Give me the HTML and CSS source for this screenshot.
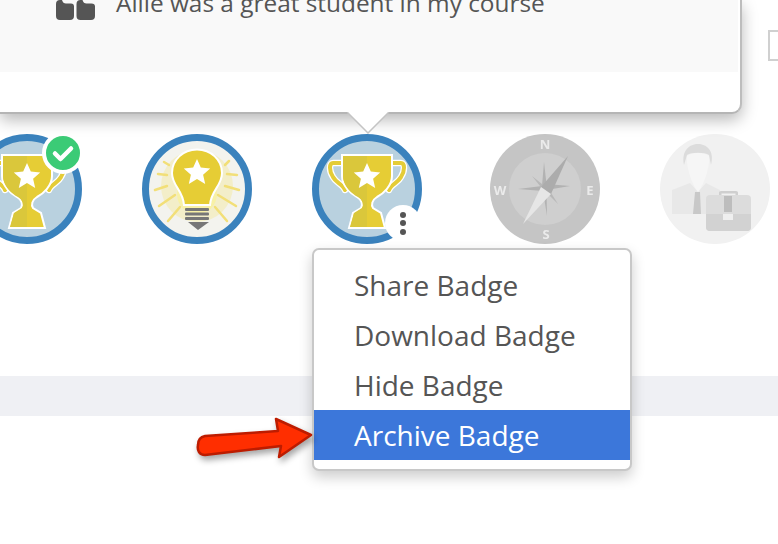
FILE: index.html
```html
<!DOCTYPE html>
<html lang="en">
<head>
<meta charset="utf-8">
<title>Badges</title>
<link rel="stylesheet" href="styles.css">
</head>
<body>
<svg class="defs" width="0" height="0" aria-hidden="true">
  <defs>
    <g id="trophy">
      <g fill="none" stroke-linecap="round" stroke-linejoin="round">
        <path d="M32 29H21C17 29 17 37 21 43C24 49 31 50 33 56" stroke="#fff" stroke-width="6.500"/>
        <path d="M78 29H89C93 29 93 37 89 43C86 49 79 50 77 56" stroke="#fff" stroke-width="6.500"/>
        <path d="M32 29H21C17 29 17 37 21 43C24 49 31 50 33 56" stroke="#e4cc37" stroke-width="4"/>
        <path d="M78 29H89C93 29 93 37 89 43C86 49 79 50 77 56" stroke="#e4cc37" stroke-width="4"/>
      </g>
      <path d="M30 21H80V42C80 52 71 60 65 63C60 66 59 71 61 74L69 79L73 94H37L41 79L49 74C51 71 50 66 45 63C39 60 30 52 30 42Z" fill="#e6cd35" stroke="#fff" stroke-width="2"/>
      <path d="M31 22H55V93H38L42 79L50 74C52 71 51 66 46 63C40 60 31 52 31 42Z" fill="#dac73b"/>
      <path d="M55 29l3.800 8.600 9.400.9-7.100 6.200 2.100 9.200-8.200-4.800-8.200 4.800 2.100-9.200-7.100-6.200 9.400-.9Z" fill="#fff"/>
    </g>
  </defs>
</svg>

<div class="top">
  <section class="card">
    <div class="quote">
      <svg class="quote-icon" viewBox="0 0 39 20" width="39" height="20" aria-hidden="true">
        <path d="M0 16V4Q0 0 4 0H6Q7 3.500 10 3.500H15Q18 3.500 18 6.500V16Q18 20 14 20H4Q0 20 0 16ZM20.500 16V4Q20.500 0 24.500 0H26.500Q27.500 3.500 30.500 3.500H35.500Q39 3.500 39 6.500V16Q39 20 35 20H24.500Q20.500 20 20.500 16Z" fill="#555"/>
      </svg>
      <p class="quote-text">Allie was a great student in my course</p>
    </div>
  </section>
  <div class="sliver"></div>
</div>

<div class="badges">
  <div class="badge">
    <svg viewBox="0 0 110 110" width="110" height="110" aria-hidden="true">
      <circle cx="55" cy="55" r="51.500" fill="#b9d1df" stroke="#3a82bd" stroke-width="7"/>
      <use href="#trophy"/>
    </svg>
    <span class="check">
      <svg viewBox="0 0 34 34" width="34" height="34" aria-hidden="true">
        <path d="M9 17.500L14.500 23L25 12.500" fill="none" stroke="#fff" stroke-width="4.500" stroke-linecap="round" stroke-linejoin="round"/>
      </svg>
    </span>
  </div>

  <div class="badge">
    <svg viewBox="0 0 110 110" width="110" height="110" aria-hidden="true">
      <circle cx="55" cy="55" r="51.500" fill="#f3f3ee" stroke="#3a82bd" stroke-width="7"/>
      <circle cx="55" cy="52" r="36" fill="#f3eec9"/>
      <circle cx="55" cy="60" r="20" fill="#f8f1a6"/>
      <g stroke="#f2df78" stroke-width="2.500" stroke-linecap="round">
        <path d="M22 28L27 31M16 40L25 41M13 56L25 52M17 72L33 61M26 87L38 73"/>
        <path d="M83 31L87 27M85 40L95 41M83 52L97 56M76 61L94 72M73 73L85 87"/>
      </g>
      <path d="M55 15.500C69 15.500 80 26 80 39C80 52 69 56 68 71H42C41 56 30 52 30 39C30 26 41 15.500 55 15.500Z" fill="#e6cd35" stroke="#fff" stroke-width="2"/>
      <path d="M55 25l3.800 8.600 9.400.9-7.100 6.200 2.100 9.200-8.200-4.800-8.200 4.800 2.100-9.200-7.100-6.200 9.400-.9Z" fill="#fff"/>
      <g fill="#777">
        <rect x="43" y="74" width="24" height="3" rx="1"/>
        <rect x="43" y="78.500" width="24" height="3" rx="1"/>
        <rect x="43" y="83" width="24" height="3" rx="1"/>
        <path d="M46 88H67L56 96Z"/>
      </g>
    </svg>
  </div>

  <div class="badge">
    <svg viewBox="0 0 110 110" width="110" height="110" aria-hidden="true">
      <circle cx="55" cy="55" r="51.500" fill="#b9d1df" stroke="#3a82bd" stroke-width="7"/>
      <use href="#trophy"/>
    </svg>
    <span class="more"><i></i><i></i><i></i></span>
  </div>

  <div class="badge badge-gap badge-faded">
    <svg viewBox="0 0 110 110" width="110" height="110" aria-hidden="true">
      <circle cx="55" cy="55" r="55" fill="#c5c5c5"/>
      <circle cx="55" cy="55" r="36" fill="#cfcfcf"/>
      <g fill="#ebebeb" font-family="'Open Sans',sans-serif" font-size="13" font-weight="700" text-anchor="middle">
        <text x="55" y="15">N</text>
        <text x="56" y="105">S</text>
        <text x="10" y="61">W</text>
        <text x="100" y="61">E</text>
      </g>
      <path d="M54 28L56.500 50L80 52L56.500 56L57 82L53 57L28 55L52 52Z" fill="#b2b2b2"/>
      <path d="M42 42L57 54L54 57ZM68 70L54 56L58 54Z" fill="#b8b8b8"/>
      <path d="M78 22L61 60L51 53Z" fill="#acacac"/>
      <path d="M33 90L51 53L61 60Z" fill="#e6e6e6"/>
    </svg>
  </div>

  <div class="badge badge-faded">
    <svg viewBox="0 0 110 110" width="110" height="110" aria-hidden="true">
      <circle cx="55" cy="55" r="55" fill="#f1f1f1"/>
      <path d="M12 56L30 49L38 58L46 49L60 56V80H12Z" fill="#e8e8e8"/>
      <path d="M27 22C32 18 44 18 49 22C50 34 44 50 38 58C32 50 26 34 27 22Z" fill="#f6f6f6"/>
      <path d="M24 31C21 16 30 10 38 10C46 10 55 16 51 31L49 21C45 18 31 18 27 21Z" fill="#dcdcdc"/>
      <path d="M35 58H40L41 80H33Z" fill="#c8c8c8"/>
      <path d="M59 61V58.500Q59 57 61 57H76Q78 57 78 58.500V61H75.500V59.500H61.500V61Z" fill="#cfcfcf"/>
      <rect x="46" y="61" width="45" height="36" rx="4" fill="#dcdcdc"/>
      <path d="M46 80H91V93Q91 97 87 97H50Q46 97 46 93Z" fill="#d2d2d2"/>
      <rect x="64" y="62" width="8" height="16" fill="#bdbdbd"/>
      <rect x="63" y="80" width="10" height="6" fill="#efefef"/>
    </svg>
  </div>
</div>

<div class="band"></div>

<svg class="callout-tip" viewBox="0 0 42 22" width="42" height="22" aria-hidden="true">
  <path d="M0 0L21 21L42 0Z" fill="#fff"/>
  <path d="M0 0L21 21L42 0" fill="none" stroke="#c4c4c4" stroke-width="1.500"/>
</svg>

<ul class="menu">
  <li>Share Badge</li>
  <li>Download Badge</li>
  <li>Hide Badge</li>
  <li class="active">Archive Badge</li>
</ul>

<svg class="arrow" viewBox="0 0 130 60" width="130" height="60" aria-hidden="true">
  <path d="M9 18L82 13L80 1L115 17L83 39L85 28L9 37C3 37 1 32 2 27C2 22 4 19 9 18Z" fill="#ff2e00" stroke="#bd1c00" stroke-width="2.500" stroke-linejoin="round"/>
</svg>
</body>
</html>
```
FILE: styles.css
```css
* {
  box-sizing: border-box;
}

html,
body {
  margin: 0;
  padding: 0;
  height: 544px;
  overflow: hidden;
  background: #fff;
}

body {
  position: relative;
  width: 778px;
  font-family: "Open Sans", sans-serif;
  color: #555;
}

.defs {
  position: absolute;
}

.top {
  display: flex;
  align-items: flex-start;
  height: 112px;
}

.card {
  flex: none;
  width: 742px;
  height: 114px;
  background: #fff;
  border-right: 2px solid #bdbdbd;
  border-bottom: 2px solid #b5b5b5;
  border-radius: 0 0 10px 0;
  box-shadow: 0 6px 16px rgba(0, 0, 0, 0.28);
  position: relative;
  z-index: 2;
}

.quote {
  height: 72px;
  margin-right: 2px;
  background: #f9f9f9;
  display: flex;
  gap: 21px;
  padding-left: 56px;
  overflow: hidden;
}

.quote-icon {
  flex: none;
}

.quote-text {
  margin: -11px 0 0;
  font-size: 24.400px;
  line-height: 28px;
  white-space: nowrap;
}

.sliver {
  flex: none;
  width: 10px;
  height: 31px;
  margin: 30px 0 0 26px;
  border: 2px solid #d0d0d0;
  border-right: 0;
}

.badges {
  display: flex;
  gap: 60px;
  margin: 22px 0 0 -28px;
}

.badge {
  position: relative;
  flex: none;
  width: 110px;
  height: 110px;
}

.badge svg {
  display: block;
}

.badge-gap {
  margin-left: 8px;
}

.badge-faded svg {
  filter: blur(0.6px);
}

.check {
  position: absolute;
  left: 70px;
  top: -2px;
  width: 42px;
  height: 42px;
  border-radius: 50%;
  background: #3bcb76;
  border: 4px solid #fff;
  display: flex;
  align-items: center;
  justify-content: center;
}

.check svg {
  flex: none;
}

.more {
  position: absolute;
  left: 73px;
  top: 71px;
  width: 36px;
  height: 36px;
  border-radius: 50%;
  background: #fff;
  display: flex;
  flex-direction: column;
  align-items: center;
  justify-content: center;
  gap: 2.500px;
}

.more i {
  width: 6px;
  height: 6px;
  border-radius: 50%;
  background: #555;
}

.band {
  height: 40px;
  margin-top: 132px;
  background: #eff0f4;
}

.callout-tip {
  position: absolute;
  left: 347px;
  top: 112px;
  z-index: 3;
}

.menu {
  position: absolute;
  left: 312px;
  top: 248px;
  width: 320px;
  height: 223px;
  margin: 0;
  padding: 10px 0 9px;
  list-style: none;
  background: #fff;
  border: 2px solid #c8c8c8;
  border-radius: 7px;
  box-shadow: 0 6px 14px rgba(0, 0, 0, 0.2);
  z-index: 4;
}

.menu li {
  height: 50px;
  padding-left: 40px;
  font-size: 28px;
  line-height: 50px;
  white-space: nowrap;
}

.menu .active {
  background: #3c77da;
  color: #fff;
}

.arrow {
  position: absolute;
  left: 196px;
  top: 418px;
  overflow: visible;
  filter: drop-shadow(2px 4px 3px rgba(0, 0, 0, 0.35));
  z-index: 5;
}
```
